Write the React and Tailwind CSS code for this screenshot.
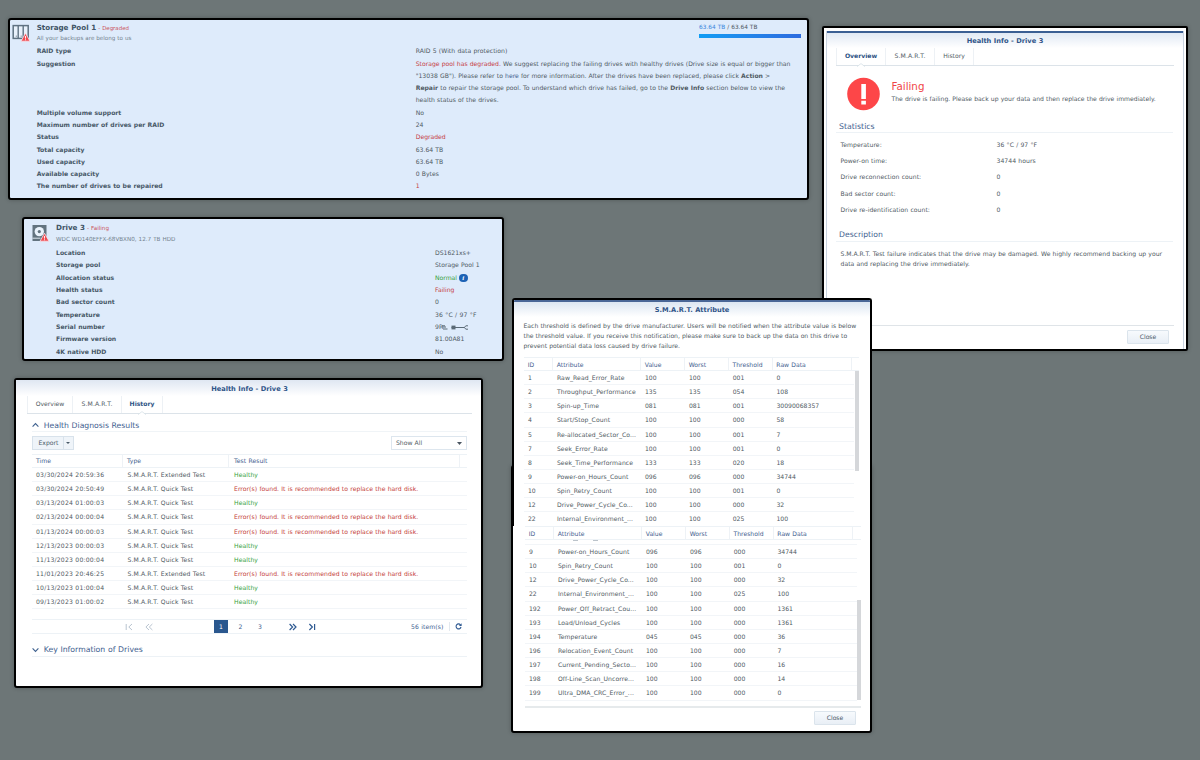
import React from 'react';

const poolRows = [
  ['Multiple volume support', 'No'],
  ['Maximum number of drives per RAID', '24'],
  ['Status', 'Degraded', 'text-[#c53d45]'],
  ['Total capacity', '63.64 TB'],
  ['Used capacity', '63.64 TB'],
  ['Available capacity', '0 Bytes'],
  ['The number of drives to be repaired', '1', 'text-[#c53d45]'],
];

const tests = [
  ['03/30/2024 20:59:36', 'Extended', true],
  ['03/30/2024 20:50:49', 'Quick', false],
  ['03/13/2024 01:00:03', 'Quick', true],
  ['02/13/2024 00:00:04', 'Quick', false],
  ['01/13/2024 00:00:03', 'Quick', false],
  ['12/13/2023 00:00:03', 'Quick', true],
  ['11/13/2023 00:00:04', 'Quick', true],
  ['11/01/2023 20:46:25', 'Extended', false],
  ['10/13/2023 01:00:04', 'Quick', true],
  ['09/13/2023 01:00:02', 'Quick', true],
];

const stats = [
  ['Temperature:', '36 °C / 97 °F'],
  ['Power-on time:', '34744 hours'],
  ['Drive reconnection count:', '0'],
  ['Bad sector count:', '0'],
  ['Drive re-identification count:', '0'],
];

const attrsTop = [
  ['1', 'Raw_Read_Error_Rate', '100', '100', '001', '0'],
  ['2', 'Throughput_Performance', '135', '135', '054', '108'],
  ['3', 'Spin-up_Time', '081', '081', '001', '30090068357'],
  ['4', 'Start/Stop_Count', '100', '100', '000', '58'],
  ['5', 'Re-allocated_Sector_Co...', '100', '100', '001', '7'],
  ['7', 'Seek_Error_Rate', '100', '100', '001', '0'],
  ['8', 'Seek_Time_Performance', '133', '133', '020', '18'],
  ['9', 'Power-on_Hours_Count', '096', '096', '000', '34744'],
  ['10', 'Spin_Retry_Count', '100', '100', '001', '0'],
  ['12', 'Drive_Power_Cycle_Co...', '100', '100', '000', '32'],
  ['22', 'Internal_Environment_...', '100', '100', '025', '100'],
];

const attrsBottom = [
  ['9', 'Power-on_Hours_Count', '096', '096', '000', '34744'],
  ['10', 'Spin_Retry_Count', '100', '100', '001', '0'],
  ['12', 'Drive_Power_Cycle_Co...', '100', '100', '000', '32'],
  ['22', 'Internal_Environment_...', '100', '100', '025', '100'],
  ['192', 'Power_Off_Retract_Cou...', '100', '100', '000', '1361'],
  ['193', 'Load/Unload_Cycles', '100', '100', '000', '1361'],
  ['194', 'Temperature', '045', '045', '000', '36'],
  ['196', 'Relocation_Event_Count', '100', '100', '000', '7'],
  ['197', 'Current_Pending_Secto...', '100', '100', '000', '16'],
  ['198', 'Off-Line_Scan_Uncorre...', '100', '100', '000', '14'],
  ['199', 'Ultra_DMA_CRC_Error_...', '100', '100', '000', '0'],
];

const Warning = () => (
  <g>
    <path d="M13.5 9.2 L18 17.2 H9 Z" fill="#f04a50" stroke="#f7e6ee" strokeWidth="0.8" strokeLinejoin="round" />
    <path d="M13.5 12v2.6M13.5 15.3v1" stroke="#fff" strokeWidth="0.9" />
  </g>
);

const PoolIcon = () => (
  <svg className="w-[19px] h-[19px]" viewBox="0 0 19 19">
    <rect x="1.2" y="1.6" width="15" height="12.8" fill="#e8f1fb" stroke="#5f7282" strokeWidth="1.5" />
    <path d="M6.2 1.5v13M11.2 1.5v13" stroke="#5f7282" strokeWidth="1.4" />
    <path d="M4.3 11.6v1.2M9.2 11.6v1.2" stroke="#5f7282" strokeWidth="0.8" />
    <Warning />
  </svg>
);

const DriveIcon = () => (
  <svg className="w-[19px] h-[19px]" viewBox="0 0 19 19">
    <path d="M1.5 1h14v16h-14z" fill="#62737f" />
    <circle cx="8.3" cy="7.6" r="4.7" fill="#eaf3fc" />
    <circle cx="8.3" cy="7.6" r="1.6" fill="#62737f" />
    <path d="M1.5 14.2h8" stroke="#eaf3fc" strokeWidth="0.9" />
    <Warning />
  </svg>
);

const Chevron = ({ up }) => (
  <svg className="w-[7px] h-[6px]" viewBox="0 0 7 6">
    <path d={up ? 'M0.6 4.6 L3.5 1.5 L6.4 4.6' : 'M0.6 1.4 L3.5 4.5 L6.4 1.4'} fill="none" stroke="#3f618f" strokeWidth="1.1" />
  </svg>
);

const PagerIcon = ({ d, muted }) => (
  <svg className="w-[8px] h-[8px]" viewBox="0 0 8 8">
    <path d={d} fill="none" stroke={muted ? '#b9c4d0' : '#2f5a92'} strokeWidth={muted ? '1' : '1.2'} />
  </svg>
);

// Label / value line of the blue detail cards
const DetailRow = ({ label, children, color = '' }) => (
  <div className="grid grid-cols-[379px_1fr]">
    <span className="font-bold text-[#475867]">{label}</span>
    <span className={color}>{children}</span>
  </div>
);

const Tab = ({ children, active, className }) => (
  <div className={`relative h-[17px] leading-[16px] text-center border-r border-[#edf1f5] ${active ? 'font-bold text-[#2c5284]' : ''} ${className}`}>
    {children}
    {active && (
      <svg className="absolute left-1/2 -ml-[4px] -bottom-[1.5px] w-[8px] h-[4px]" viewBox="0 0 8 4">
        <path d="M0 3.6 L4 0.6 L8 3.6" fill="#fff" stroke="#d6dfe7" strokeWidth="0.8" />
      </svg>
    )}
  </div>
);

const Button = ({ children }) => (
  <button className="w-[42px] h-[14px] leading-[12px] text-center rounded-[1px] border border-[#dbe4ec] bg-linear-to-b from-[#f7fafd] to-[#e9eff6] text-[#4a5a69]">{children}</button>
);

const attrCols = 'grid grid-cols-[29px_88px_44px_43.8px_43.8px_79px]';

const AttrHeader = () => (
  <div className={`${attrCols} h-[14px] leading-[13px] border-y border-[#edf2f6] text-[#3f618f]`}>
    {['ID', 'Attribute', 'Value', 'Worst', 'Threshold', 'Raw Data'].map((h) => (
      <span key={h} className="pl-[3.7px] border-r border-[#eef2f6]">{h}</span>
    ))}
  </div>
);

const AttrRow = ({ row }) => (
  <div className={`${attrCols} h-[14.15px] leading-[14.9px] border-b border-[#f2f5f8]`}>
    {row.map((cell, i) => (
      <span key={i} className={`pl-[3.9px] whitespace-nowrap ${i === 1 ? 'tracking-[0.08px]' : ''}`}>{cell}</span>
    ))}
  </div>
);

const StoragePool = () => (
  <section className="absolute left-[8px] top-[18px] w-[801px] h-[182px] border-2 border-black rounded-[3px] bg-[#deebfb] pl-[2px] pr-[6px] flex gap-[5.7px] shadow-[0_0_4px_rgba(0,0,0,0.25)]">
    <div className="w-[19px] pt-[4px]"><PoolIcon /></div>
    <div className="flex-1">
      <div className="flex justify-between h-[25.4px]">
        <div>
          <h2 className="pt-[2px] leading-[11px] whitespace-nowrap"><b className="text-[7.15px] text-[#405465]">Storage Pool 1</b><span className="text-[5.45px] text-[#c9525c]"> - Degraded</span></h2>
          <p className="leading-[8.6px] text-[5.6px] text-[#74838f]">All your backups are belong to us</p>
        </div>
        <div className="w-[102px] pt-[2px]">
          <p className="leading-[11px] text-[5.8px] whitespace-nowrap"><span className="text-[#3b87dc]">63.64 TB</span> / 63.64 TB</p>
          <div className="mt-[1px] h-[4px] bg-linear-to-r from-[#109df4] to-[#2c6bdf]" />
        </div>
      </div>
      <div className="leading-[12.27px] whitespace-nowrap">
        <DetailRow label="RAID type"><span className="tracking-[0.04px]">RAID 5 (With data protection)</span></DetailRow>
        <DetailRow label="Suggestion">
          <span className="text-[#c53d45]">Storage pool has degraded.</span> We suggest replacing the failing drives with healthy drives (Drive size is equal or bigger than<br />
          "13038 GB"). Please refer to <span className="text-[#3f618f]">here</span> for more information. After the drives have been replaced, please click <b>Action</b> &gt;<br />
          <b>Repair</b> to repair the storage pool. To understand which drive has failed, go to the <b>Drive Info</b> section below to view the<br />
          health status of the drives.
        </DetailRow>
        {poolRows.map(([label, value, color]) => (
          <DetailRow key={label} label={label} color={color}>{value}</DetailRow>
        ))}
      </div>
    </div>
  </section>
);

const DriveCard = () => (
  <section className="absolute left-[22px] top-[217px] w-[482px] h-[144px] border-2 border-black rounded-[3px] bg-[#deebfb] pl-[7px] flex gap-[6px] shadow-[0_0_4px_rgba(0,0,0,0.25)]">
    <div className="w-[19px] pt-[5px]"><DriveIcon /></div>
    <div className="flex-1">
      <h2 className="pt-[3.4px] leading-[11px]"><b className="text-[7.15px] text-[#405465]">Drive 3</b><span className="text-[5.6px] text-[#c9525c]"> - Failing</span></h2>
      <p className="leading-[10px] text-[5.65px] text-[#74838f]">WDC WD140EFFX-68VBXN0, 12.7 TB HDD</p>
      <div className="mt-[2.5px] leading-[12.35px]">
        <DetailRow label="Location">DS1621xs+</DetailRow>
        <DetailRow label="Storage pool">Storage Pool 1</DetailRow>
        <DetailRow label="Allocation status">
          <span className="flex items-center gap-[2px] h-[12.35px]">
            <span className="text-[#35a13c]">Normal</span>
            <span className="w-[8.5px] h-[8.5px] rounded-full bg-[#1d62b5] text-white text-[7px] leading-[8.5px] text-center font-bold italic font-['Liberation_Serif',serif]">i</span>
          </span>
        </DetailRow>
        <DetailRow label="Health status" color="text-[#c53d45]">Failing</DetailRow>
        <DetailRow label="Bad sector count">0</DetailRow>
        <DetailRow label="Temperature"><span className="tracking-[0.12px]">36 °C / 97 °F</span></DetailRow>
        <DetailRow label="Serial number">
          <span className="flex items-center h-[12.35px]">
            9R
            {/* scribbled-out part of the serial */}
            <svg className="w-[27px] h-[7px] -ml-[1px]" viewBox="0 0 27 7">
              <path d="M0 3h4M0 1.8h3M1 5h4.5M9.5 3.5h13" stroke="#5a6a76" strokeWidth="1" fill="none" />
              <path d="M9.5 1.6h4v3.8h-4z" fill="#5a6a76" />
              <path d="M26 1.8h-2.2l-1.4 1.7 1.4 1.7h2.2" stroke="#4f5d6a" strokeWidth="0.9" fill="none" />
            </svg>
          </span>
        </DetailRow>
        <DetailRow label="Firmware version">81.00A81</DetailRow>
        <DetailRow label="4K native HDD">No</DetailRow>
      </div>
    </div>
  </section>
);

const HistoryWindow = () => (
  <section className="absolute left-[14px] top-[378px] w-[469px] h-[310px] border-2 border-black rounded-[3px] bg-white shadow-[0_0_4px_rgba(0,0,0,0.25)]">
    <div className="h-[16px] pt-[4px] pl-[2px] bg-linear-to-b from-[#dfe7f2] to-white text-center leading-[11.6px] font-bold text-[6.65px] text-[#2f5488]">Health Info - Drive 3</div>
    <div className="ml-[11px] mr-[9px] flex border-b border-[#dce3e9] h-[18px]">
      <Tab className="w-[46px] border-l">Overview</Tab>
      <Tab className="w-[49px] tracking-[0.12px]">S.M.A.R.T.</Tab>
      <Tab active className="w-[41px]">History</Tab>
    </div>
    <div className="ml-[16px] mr-[14px]">
      <div className="mt-[5px] h-[13px] leading-[13px] flex items-center gap-[4.7px] border-b border-[#f0f4f7] text-[7.7px] text-[#3f618f]"><Chevron up />Health Diagnosis Results</div>
      <div className="pt-[4px] flex justify-between">
        <div className="flex w-[42px] h-[14px] -ml-[0.5px] border border-[#d8e2eb] bg-[#eff4f9] leading-[12px] text-[#4a5a69]">
          <span className="w-[31px] text-center border-r border-[#d8e2eb] pl-[2px]">Export</span>
          <span className="flex-1 flex items-center justify-center"><svg className="w-[4px] h-[2px]" viewBox="0 0 4 2"><path d="M0 0h4L2 2z" fill="#4a5a69" /></svg></span>
        </div>
        <div className="flex items-center justify-between w-[76px] h-[14px] border border-[#dde6ee] pl-[4px] pr-[4px]">
          Show All
          <svg className="w-[5px] h-[3px]" viewBox="0 0 5 3"><path d="M0 0h5L2.5 3z" fill="#4a5560" /></svg>
        </div>
      </div>
      <div className="mt-[4px] grid grid-cols-[91px_106px_231px] h-[14px] leading-[12.4px] border-y border-[#edf2f6] text-[#3f618f]">
        <span className="pl-[4px] border-r border-[#eef2f6]">Time</span>
        <span className="pl-[4px] border-r border-[#eef2f6]">Type</span>
        <span className="pl-[5px] border-r border-[#eef2f6] tracking-[0.05px]">Test Result</span>
      </div>
      {tests.map(([time, kind, ok]) => (
        <div key={time} className="grid grid-cols-[91px_106px_231px] h-[14.14px] leading-[14.6px] border-b border-[#f2f5f8]">
          <span className="pl-[4px] tracking-[0.19px] whitespace-nowrap">{time}</span>
          <span className="pl-[4.5px] tracking-[0.11px]">S.M.A.R.T. {kind} Test</span>
          <span className={`pl-[5px] whitespace-nowrap tracking-[0.05px] ${ok ? 'text-[#35a13c]' : 'text-[#c4403a]'}`}>{ok ? 'Healthy' : 'Error(s) found. It is recommended to replace the hard disk.'}</span>
        </div>
      ))}
      <div className="mt-[10px] h-[15px] border-y border-[#edf2f6] flex items-center text-[#3f618f]">
        <div className="w-[182px] flex gap-[12px] pl-[93px]">
          <PagerIcon muted d="M1.2 1v6M7 1L3.8 4l3.2 3" />
          <PagerIcon muted d="M4 1L0.9 4 4 7M7.4 1L4.3 4l3.1 3" />
        </div>
        <span className="w-[14px] h-[13px] leading-[13px] text-center bg-[#2a578e] text-white">1</span>
        <span className="w-[25px] text-center">2</span>
        <span className="w-[14px] text-center">3</span>
        <div className="w-[144px] flex gap-[11px] pl-[22px]">
          <PagerIcon d="M0.6 1l3 3-3 3M4 1l3 3-3 3" />
          <PagerIcon d="M1.4 1l3 3-3 3M6.6 1v6" />
        </div>
        <span className="w-[37.5px] whitespace-nowrap tracking-[0.1px]">56 item(s)</span>
        <span className="h-[9px] border-l border-[#e3e9ef] pl-[5px] flex items-center">
          <svg className="w-[7px] h-[7px]" viewBox="0 0 7 7"><path d="M5.5 1.8A2.5 2.5 0 1 0 6 4" fill="none" stroke="#2f5a92" strokeWidth="1.1" /><path d="M6.6 0.3v2.8H3.9z" fill="#2f5a92" /></svg>
        </span>
      </div>
      <div className="mt-[9px] h-[14px] leading-[13px] flex items-center gap-[4.7px] border-b border-[#edf2f6] text-[7.75px] text-[#3f618f]"><Chevron />Key Information of Drives</div>
    </div>
  </section>
);

const OverviewWindow = () => (
  <section className="absolute left-[822px] top-[26px] w-[366px] h-[325px] border-2 border-black rounded-[2px] bg-white px-[2px] pt-[3px] shadow-[0_0_4px_rgba(0,0,0,0.25)]">
    <div className="h-full border-x border-[#c9d3e0]">
      <div className="h-[17px] border-t-2 border-[#3b5f93] pt-[2px] bg-linear-to-b from-[#e1e9f4] to-white text-center leading-[12px] font-bold text-[6.65px] text-[#2f5488]">Health Info - Drive 3</div>
      <div className="mx-[9px] flex border-b border-[#dce3e9] h-[18px]">
        <Tab active className="w-[50px] border-l">Overview</Tab>
        <Tab className="w-[49px] tracking-[0.12px]">S.M.A.R.T.</Tab>
        <Tab className="w-[39px]">History</Tab>
      </div>
      <div className="mt-[11px] ml-[19.5px] flex gap-[12px] h-[34px]">
        <svg className="w-[33px] h-[34px]" viewBox="0 0 33 34">
          <circle cx="16.5" cy="17" r="16.3" fill="#fd4648" />
          <path d="M14.3 7h4.6v15h-4.6zM14.3 23.8h4.6v3.7h-4.6z" fill="#fff" />
        </svg>
        <div>
          <p className="pt-[3.2px] text-[10.3px] leading-[13px] text-[#f04448]">Failing</p>
          <p className="leading-[11px] whitespace-nowrap">The drive is failing. Please back up your data and then replace the drive immediately.</p>
        </div>
      </div>
      <h3 className="ml-[9px] mr-[10px] pl-[3px] mt-[9px] h-[13px] leading-[13.4px] border-b border-[#edf2f6] text-[7.8px] text-[#3f618f]">Statistics</h3>
      <div className="mt-[3.5px] ml-[13.5px] leading-[16.4px]">
        {stats.map(([label, value]) => (
          <div key={label} className="grid grid-cols-[156px_1fr] tracking-[0.05px]"><span>{label}</span><span>{value}</span></div>
        ))}
      </div>
      <h3 className="ml-[9px] mr-[10px] pl-[3px] mt-[9.5px] h-[14px] leading-[13px] border-b border-[#edf2f6] text-[7.7px] text-[#3f618f]">Description</h3>
      <p className="mt-[6.5px] ml-[13.5px] leading-[10.2px] whitespace-nowrap tracking-[0.015px]">
        S.M.A.R.T. Test failure indicates that the drive may be damaged. We highly recommend backing up your<br />
        data and replacing the drive immediately.
      </p>
      <div className="mt-[56px] mx-[9px] pt-[4px] pr-[5px] border-t border-[#dfe4e8] flex justify-end"><Button>Close</Button></div>
    </div>
  </section>
);

const AttributeWindow = () => (
  <>
    <section className="absolute left-[511px] top-[465px] w-[361px] h-[268px] border-2 border-black rounded-[3px] bg-white pt-[59px] shadow-[0_0_4px_rgba(0,0,0,0.25)]">
      <div className="ml-[12px] mr-[9px]">
        <AttrHeader />
        <div className="flex justify-between">
          <div className="w-[332px]">
            {/* tail of the row scrolled under the header */}
            <div className="h-[5px] pl-[48px] flex gap-[15px] border-b border-[#f2f5f8]">
              <span className="w-[5px] h-px bg-[#bcc4cb]" />
              <span className="w-[5px] h-px bg-[#bcc4cb]" />
            </div>
            {attrsBottom.map((row) => <AttrRow key={row[0]} row={row} />)}
          </div>
          <div className="mt-[60px] w-[4px] h-[100px] bg-[#d5d7da]" />
        </div>
        <div className="mt-[5.3px] pt-[3px] pr-[5px] border-t-2 border-[#e6eaec] flex justify-end"><Button>Close</Button></div>
      </div>
    </section>
    <section className="absolute left-[512px] top-[298px] w-[360px] h-[228px] overflow-hidden border-2 border-b-0 border-black rounded-t-[3px] bg-white">
      <div className="h-[17px] border-t-2 border-[#4a6797] pt-[2px] bg-linear-to-b from-[#dce6f2] to-white text-center leading-[12px] font-bold text-[6.65px] text-[#2f5488]">S.M.A.R.T. Attribute</div>
      <div className="ml-[10px] mr-[11px]">
        <p className="mt-[4px] -ml-[0.5px] leading-[10.2px] whitespace-nowrap tracking-[-0.012px]">
          Each threshold is defined by the drive manufacturer. Users will be notified when the attribute value is below<br />
          the threshold value. If you receive this notification, please make sure to back up the data on this drive to<br />
          prevent potential data loss caused by drive failure.
        </p>
        <div className="mt-[5.4px]"><AttrHeader /></div>
        <div className="flex justify-between">
          <div className="w-[330px]">
            {attrsTop.map((row) => <AttrRow key={row[0]} row={row} />)}
          </div>
          <div className="w-[4px] h-[100px] bg-[#d5d7da]" />
        </div>
      </div>
    </section>
  </>
);

export default function App() {
  return (
    <div className="relative w-[1200px] h-[760px] overflow-hidden bg-[#6d7677] font-['DejaVu_Sans',sans-serif] text-[6.1px] text-[#4f5a63] [word-spacing:0.034em]">
      <StoragePool />
      <DriveCard />
      <OverviewWindow />
      <HistoryWindow />
      <AttributeWindow />
    </div>
  );
}
